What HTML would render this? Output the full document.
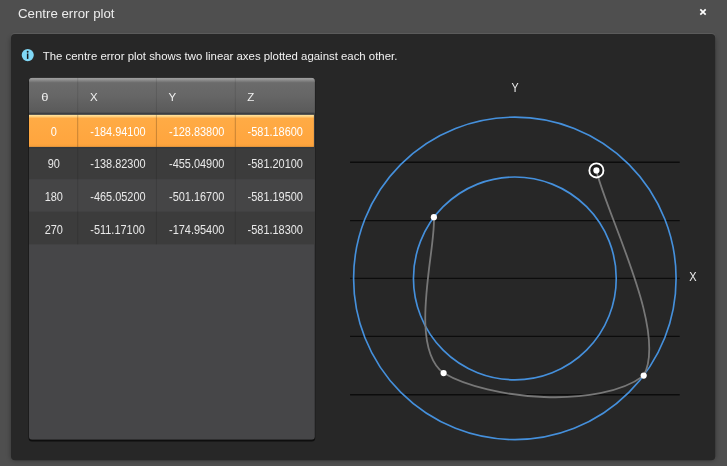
<!DOCTYPE html>
<html lang="en">
<head>
<meta charset="utf-8">
<title>Centre error plot</title>
<style>
html,body{margin:0;padding:0;}
body{width:727px;height:466px;overflow:hidden;background:#4f4f4f;font-family:"Liberation Sans",sans-serif;color:#e8e8e8;position:relative;}
#root{position:absolute;left:0;top:0;width:727px;height:466px;will-change:transform;}
#title{position:absolute;left:18px;top:5px;font-size:13px;line-height:18px;transform:scaleX(1.02);transform-origin:0 50%;color:#ececec;white-space:nowrap;}
#close{position:absolute;left:697.7px;top:7px;width:10px;height:10px;}
#panel{position:absolute;left:12px;top:38px;width:702px;height:421px;background:#272727;border-radius:4px;box-shadow:0 0 4px 1.5px rgba(0,0,0,0.25);}
#panelsvg{position:absolute;left:0;top:0;}
#info{position:absolute;left:20px;top:47px;}
#desc{position:absolute;left:42.8px;top:48px;font-size:11.4px;line-height:17px;white-space:nowrap;color:#f2f2f2;}
#table{position:absolute;left:0;top:0;}
#plot{position:absolute;left:0;top:0;}
</style>
</head>
<body>
<div id="root">
<div id="title">Centre error plot</div>
<svg id="close" viewBox="0 0 10 10"><path d="M2.3 2.3 L7.7 7.7 M7.7 2.3 L2.3 7.7" stroke="#ffffff" stroke-width="1.7" fill="none"/></svg>
<div id="panel"></div>
<svg id="panelsvg" width="727" height="466" viewBox="0 0 727 466"><rect x="11" y="33.1" width="704.2" height="20" rx="4" fill="#5b5b5b"/><rect x="11" y="34" width="704.2" height="426.2" rx="4" fill="#272727"/></svg>
<svg id="info" width="16" height="16" viewBox="0 0 16 16"><circle cx="7.75" cy="8.1" r="6.05" fill="#80d8f6"/><rect x="6.9" y="6.5" width="1.5" height="5.4" fill="#14191c"/><circle cx="7.65" cy="4.8" r="0.95" fill="#14191c"/></svg>
<div id="desc">The centre error plot shows two linear axes plotted against each other.</div>
<svg id="table" width="727" height="466" viewBox="0 0 727 466">
<defs><linearGradient id="hg" x1="0" y1="0" x2="0" y2="1"><stop offset="0" stop-color="#a2a2a2"/><stop offset="0.05" stop-color="#939393"/><stop offset="0.14" stop-color="#6b6b6b"/><stop offset="0.5" stop-color="#666666"/><stop offset="1" stop-color="#595959"/></linearGradient>
<linearGradient id="og" x1="0" y1="0" x2="0" y2="1"><stop offset="0" stop-color="#ffe6a4"/><stop offset="0.045" stop-color="#ffd484"/><stop offset="0.11" stop-color="#ffab45"/><stop offset="0.9" stop-color="#ffa53e"/><stop offset="1" stop-color="#f59e3a"/></linearGradient>
<clipPath id="tc"><rect x="28.9" y="77.7" width="286.0" height="362.1" rx="3.5"/></clipPath></defs>
<rect x="28.6" y="78.7" width="286.6" height="362.7" rx="3.5" fill="#0a0a0a" opacity="0.85"/>
<g clip-path="url(#tc)">
<rect x="28.9" y="77.7" width="286.0" height="362.1" fill="#464648"/>
<rect x="28.9" y="77.7" width="286.0" height="36" fill="url(#hg)"/>
<rect x="28.9" y="147" width="286.0" height="32.5" fill="#3c3c3c"/>
<rect x="28.9" y="179.4" width="286.0" height="32.4" fill="#454546"/>
<rect x="28.9" y="211.7" width="286.0" height="32.7" fill="#3c3c3c"/>
<rect x="28.9" y="112.7" width="286.0" height="2.2" fill="#3b3e42"/>
<rect x="28.9" y="146" width="286.0" height="2.5" fill="#34373b"/>
<rect x="28.9" y="114.85" width="285.0" height="32.05" fill="url(#og)"/>
<rect x="77.2" y="77.7" width="1" height="35" fill="#000" opacity="0.11"/>
<rect x="77.2" y="114.6" width="1" height="32.3" fill="#000" opacity="0.22"/>
<rect x="77.2" y="148.4" width="1" height="96" fill="#000" opacity="0.12"/>
<rect x="155.9" y="77.7" width="1" height="35" fill="#000" opacity="0.11"/>
<rect x="155.9" y="114.6" width="1" height="32.3" fill="#000" opacity="0.22"/>
<rect x="155.9" y="148.4" width="1" height="96" fill="#000" opacity="0.12"/>
<rect x="234.8" y="77.7" width="1" height="35" fill="#000" opacity="0.11"/>
<rect x="234.8" y="114.6" width="1" height="32.3" fill="#000" opacity="0.22"/>
<rect x="234.8" y="148.4" width="1" height="96" fill="#000" opacity="0.12"/>
</g>
<g font-family="Liberation Sans, sans-serif" font-size="11.5" fill="#f0f0f0">
<text transform="translate(41.2,101.4) scale(1.13,1)">θ</text>
<text x="89.9" y="101.4">X</text>
<text x="168.6" y="101.4">Y</text>
<text x="247.3" y="101.4">Z</text>
</g>
<g font-family="Liberation Sans, sans-serif" font-size="12.3">
<text transform="translate(53.8,136.0) scale(0.89,1)" text-anchor="middle" fill="#ffffff">0</text>
<text transform="translate(90.3,136.0) scale(0.89,1)" fill="#ffffff">-184.94100</text>
<text transform="translate(169.0,136.0) scale(0.89,1)" fill="#ffffff">-128.83800</text>
<text transform="translate(247.6,136.0) scale(0.89,1)" fill="#ffffff">-581.18600</text>
<text transform="translate(53.8,168) scale(0.89,1)" text-anchor="middle" fill="#e9e9e9">90</text>
<text transform="translate(90.3,168) scale(0.89,1)" fill="#e9e9e9">-138.82300</text>
<text transform="translate(169.0,168) scale(0.89,1)" fill="#e9e9e9">-455.04900</text>
<text transform="translate(247.6,168) scale(0.89,1)" fill="#e9e9e9">-581.20100</text>
<text transform="translate(53.8,201.0) scale(0.89,1)" text-anchor="middle" fill="#e9e9e9">180</text>
<text transform="translate(90.3,201.0) scale(0.89,1)" fill="#e9e9e9">-465.05200</text>
<text transform="translate(169.0,201.0) scale(0.89,1)" fill="#e9e9e9">-501.16700</text>
<text transform="translate(247.6,201.0) scale(0.89,1)" fill="#e9e9e9">-581.19500</text>
<text transform="translate(53.8,234) scale(0.89,1)" text-anchor="middle" fill="#e9e9e9">270</text>
<text transform="translate(90.3,234) scale(0.89,1)" fill="#e9e9e9">-511.17100</text>
<text transform="translate(169.0,234) scale(0.89,1)" fill="#e9e9e9">-174.95400</text>
<text transform="translate(247.6,234) scale(0.89,1)" fill="#e9e9e9">-581.18300</text>
</g>
</svg>
<svg id="plot" width="727" height="466" viewBox="0 0 727 466">
  <g stroke="#0c0c0c" stroke-width="1.25" fill="none">
    <path d="M350.1 220.5H679.7M350.1 278.4H679.7M350.1 336.4H679.7"/>
    <path d="M350.1 162.35H679.7M350.1 394.65H679.7" stroke-width="1.5"/>
  </g>
  <g stroke="#4590dc" stroke-width="1.65" fill="none">
    <circle cx="514.85" cy="278.4" r="161.25"/>
    <circle cx="514.85" cy="278.4" r="101.4"/>
  </g>
  <circle cx="596.4" cy="170.4" r="7.05" fill="#1b1b1b"/>
  <g stroke="#777777" stroke-width="1.8" fill="none" stroke-linecap="round">
    <path d="M596.3 170.5 C607.6 216.8 667.7 331.3 643.7 375.6"/>
    <path d="M643.7 375.6 C599.7 409.3 488.4 399.8 443.6 373.1"/>
    <path d="M443.6 373.1 C407.5 346.3 436.1 249.1 433.9 217.2"/>
  </g>
  <circle cx="596.4" cy="170.4" r="7.05" fill="none" stroke="#ffffff" stroke-width="1.85"/>
  <g fill="#ffffff">
    <circle cx="596.4" cy="170.4" r="3.1"/>
    <circle cx="643.7" cy="375.6" r="3.1"/>
    <circle cx="443.6" cy="373.1" r="3.1"/>
    <circle cx="433.9" cy="217.2" r="3.1"/>
  </g>
  <g font-family="Liberation Sans, sans-serif" font-size="12.5" fill="#ececec" text-anchor="middle">
    <text transform="translate(515,91.6) scale(0.86,1)">Y</text>
    <text transform="translate(692.8,280.8) scale(0.88,1)">X</text>
  </g>
</svg>
</div>
</body>
</html>
